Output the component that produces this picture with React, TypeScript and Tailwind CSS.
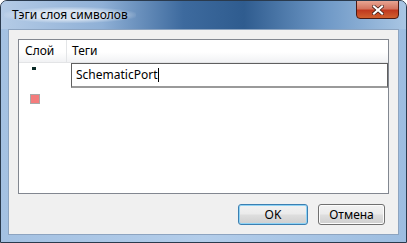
export default function App() {
  const font = { fontFamily: '"Noto Sans", "Open Sans", sans-serif' };

  return (
    <div className="w-[407px] h-[243px] overflow-hidden bg-white" style={font}>
      <div className="relative flex h-[243px] w-[407px] flex-col overflow-hidden rounded-t-[7px] border border-[#2a3a4d] bg-[linear-gradient(90deg,#a4c1e2_0%,#b3cdea_50%,#9dbde0_100%)] px-[7px] pb-[7px]">
        {/* title bar */}
        <div className="-mx-[7px] flex h-[28px] items-center bg-[linear-gradient(90deg,#b4cbe6_0%,#8fb0d6_25%,#3d6a9e_45%,#2f5c8f_60%,#6e98c6_80%,#a9c6e4_100%)] pl-[11px]">
          <span className="-ml-[8px] rounded-full bg-[radial-gradient(ellipse_at_center,rgba(255,255,255,0.6)_40%,rgba(255,255,255,0)_75%)] px-[8px] text-[12px] leading-[16px] text-black">
            Тэги слоя символов
          </span>
        </div>

        {/* close button */}
        <div className="absolute right-[7px] top-[-1px] flex h-[19px] w-[43px] items-center justify-center rounded-b-[4px] border border-[#4a1a14] bg-[linear-gradient(180deg,#e8a593_0%,#d47560_45%,#c0391f_55%,#d0602f_100%)]">
          <svg width="12" height="10" viewBox="0 0 12 10">
            <path d="M2 1.5 L10 8.5 M10 1.5 L2 8.5" stroke="#3a1a14" strokeWidth="3.6" strokeLinecap="square" />
            <path d="M2 1.5 L10 8.5 M10 1.5 L2 8.5" stroke="#ffffff" strokeWidth="2.2" strokeLinecap="square" />
          </svg>
        </div>

        {/* client area */}
        <div className="flex flex-1 flex-col border border-[#8da4c0] bg-[#f0f0f0]">
          <div className="mx-[9px] mt-[9px] h-[155px] border border-[#828790] bg-white">
            {/* header */}
            <div className="flex h-[23px] border-b border-[#e3e4e6] bg-[linear-gradient(180deg,#ffffff_0%,#ffffff_55%,#f1f2f4_100%)] text-[12px] leading-[22px] text-black">
              <div className="w-[48px] border-r border-[#e3e5e7] pl-[6px]">Слой</div>
              <div className="flex-1 pl-[5px]">Теги</div>
            </div>

            {/* row 1 */}
            <div className="flex h-[24px]">
              <div className="w-[49px] pl-[13px] pt-[4px]">
                <div className="h-[3px] w-[4px] bg-[#0a2a26]" />
              </div>
              <div className="flex flex-1 pl-[3px]">
                <div className="flex h-[25px] flex-1 items-center border border-b-2 border-[#5f5f5f] border-b-[#9a9a9a] bg-white pl-[4px] text-[12px] text-black">
                  SchematicPort
                  <span className="ml-[1px] h-[14px] w-[1px] bg-black" />
                </div>
              </div>
            </div>

            {/* row 2 */}
            <div className="flex h-[24px]">
              <div className="w-[49px] pl-[11px] pt-[7px]">
                <div className="h-[10px] w-[10px] border border-[#a8a8a8] bg-[#f47c7c]" />
              </div>
            </div>
          </div>

          {/* buttons */}
          <div className="mt-[10px] flex justify-end gap-[10px] pr-[13px]">
            <button className="h-[21px] w-[70px] rounded-[3px] border border-[#3c7fb1] bg-[linear-gradient(180deg,#f2f2f2_0%,#ebebeb_45%,#dddddd_55%,#cfcfcf_100%)] text-[12px] leading-[18px] text-black shadow-[inset_0_0_0_1px_#8fd3f5]">
              OK
            </button>
            <button className="h-[21px] w-[67px] rounded-[3px] border border-[#707070] bg-[linear-gradient(180deg,#f2f2f2_0%,#ebebeb_45%,#dddddd_55%,#cfcfcf_100%)] text-[12px] leading-[18px] text-black shadow-[inset_0_0_0_1px_#fcfcfc]">
              Отмена
            </button>
          </div>
        </div>
      </div>
    </div>
  );
}
